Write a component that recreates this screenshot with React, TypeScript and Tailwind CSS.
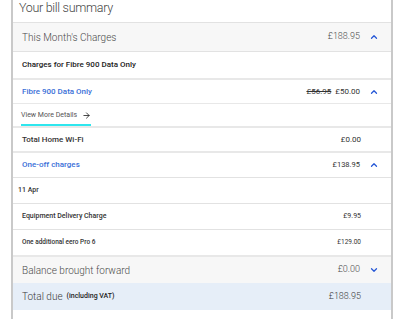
import { ChevronUp, ChevronDown, ArrowRight } from 'lucide-react';

function Chevron({ down }: { down?: boolean }) {
  const C = down ? ChevronDown : ChevronUp;
  return <C className="w-[10px] h-[10px] text-[#2557d6] ml-[9px]" strokeWidth={3} />;
}

export default function App() {
  return (
    <div className="w-[400px] h-[319px] bg-white overflow-hidden font-['Roboto',sans-serif] text-[#333]">
      <div className="ml-[11px] w-[382px] h-full border-l-2 border-r-2 border-[#c9c9c9] flex flex-col">
        {/* Title */}
        <div className="h-[22px] pl-[6px] flex items-center text-[12.5px] font-light text-[#444] tracking-[-0.3px] leading-none pb-[6px]">
          Your bill summary
        </div>

        {/* This month */}
        <div className="h-[29px] border-t border-[#e2e2e2] bg-[#f7f7f7] flex items-center pl-[9px] pr-[12px] text-[10px] font-light text-[#4a4a4a]">
          <span className="flex-1">This Month's Charges</span>
          <span className="text-[9px]">£188.95</span>
          <Chevron />
        </div>

        <div className="h-[27px] border-t border-[#e2e2e2] flex items-center pl-[9px] text-[8px] font-medium text-[#222]">
          Charges for Fibre 900 Data Only
        </div>

        <div className="h-[25px] border-t-2 border-[#e8e8e8] flex items-center pl-[9px] pr-[12px] text-[8px]">
          <span className="flex-1 font-medium text-[#3a6fd8]">Fibre 900 Data Only</span>
          <span className="line-through text-[#333]">£56.95</span>
          <span className="ml-[4px] text-[#333]">£50.00</span>
          <Chevron />
        </div>

        <div className="h-[23px] border-t border-[#e8e8e8] flex items-center pl-[8px] text-[7px] text-[#555]">
          <span className="relative flex items-center">
            View More Details
            <ArrowRight className="w-[9px] h-[9px] ml-[5px] text-[#222]" strokeWidth={2.2} />
            <span className="absolute left-0 -bottom-[6px] w-[70px] h-[2px] bg-[#2ee6ee]" />
          </span>
        </div>

        <div className="h-[25px] border-t-2 border-[#e8e8e8] flex items-center pl-[9px] pr-[30px] text-[8px] text-[#333]">
          <span className="flex-1 font-medium">Total Home Wi-Fi</span>
          <span>£0.00</span>
        </div>

        <div className="h-[26px] border-t-2 border-[#e8e8e8] flex items-center pl-[9px] pr-[12px] text-[8px]">
          <span className="flex-1 font-medium text-[#3a6fd8]">One-off charges</span>
          <span className="text-[#333] text-[7.5px]">£138.95</span>
          <Chevron />
        </div>

        <div className="h-[26px] border-t border-[#e2e2e2] flex items-center pl-[5px] text-[7px] font-medium text-[#333]">
          11 Apr
        </div>

        <div className="h-[26px] border-t border-[#e2e2e2] flex items-center pl-[9px] pr-[30px] text-[7px] font-medium text-[#333]">
          <span className="flex-1">Equipment Delivery Charge</span>
          <span className="font-normal">£9.95</span>
        </div>

        <div className="h-[26px] border-t border-[#e2e2e2] flex items-center pl-[9px] pr-[30px] text-[6.5px] font-medium text-[#333]">
          <span className="flex-1">One additional eero Pro 6</span>
          <span className="font-normal">£129.00</span>
        </div>

        <div className="h-[28px] border-t-2 border-[#e8e8e8] bg-[#f7f7f7] flex items-center pl-[9px] pr-[12px] text-[10px] font-light text-[#4a4a4a]">
          <span className="flex-1">Balance brought forward</span>
          <span className="text-[9px]">£0.00</span>
          <Chevron down />
        </div>

        <div className="h-[27px] bg-[#e6eef8] flex items-center pl-[9px] pr-[30px] text-[10px] font-light text-[#3a3a3a]">
          <span>Total due</span>
          <span className="ml-[4px] text-[7px] font-medium text-[#222]">(including VAT)</span>
          <span className="flex-1" />
          <span className="text-[9px]">£188.95</span>
        </div>
        <div className="flex-1" />
      </div>
    </div>
  );
}
